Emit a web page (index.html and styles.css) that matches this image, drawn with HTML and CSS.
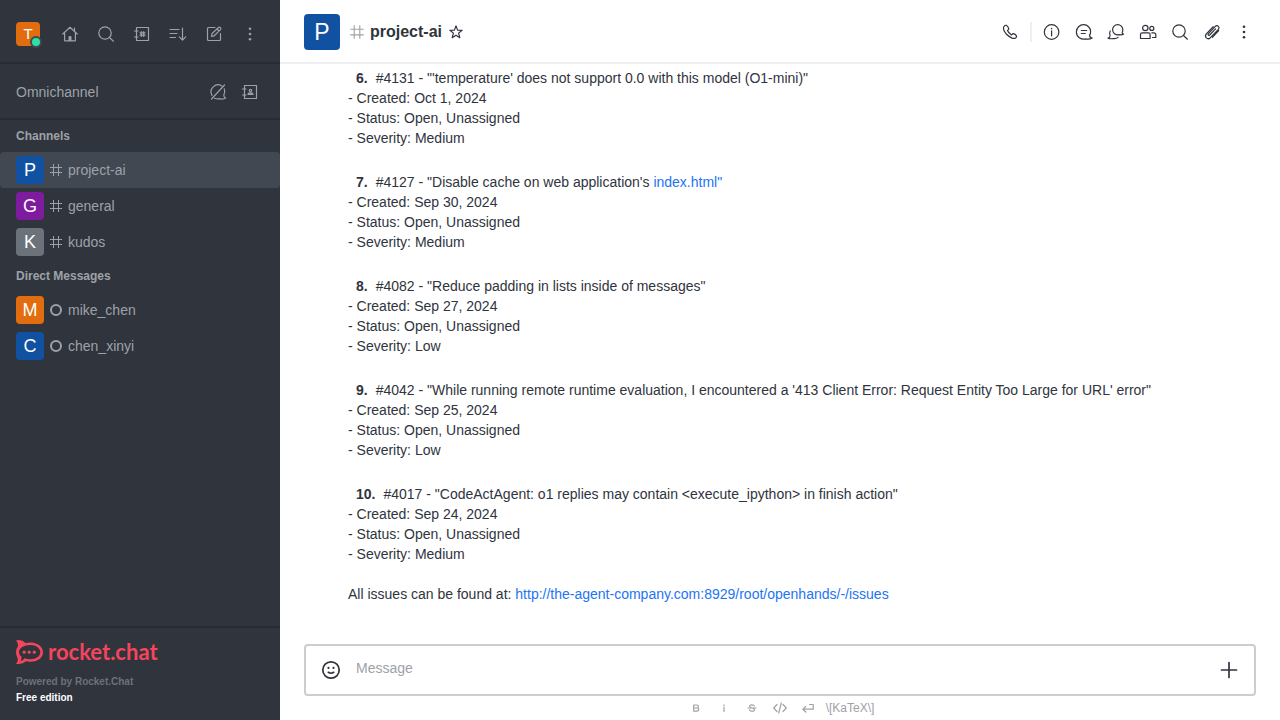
FILE: index.html
```html
<!DOCTYPE html>
<html lang="en">
<head>
<meta charset="utf-8">
<title>project-ai</title>
<link rel="stylesheet" href="styles.css">
</head>
<body>
<svg class="defs" aria-hidden="true">
  <symbol id="hash" viewBox="0 0 16 16"><path d="M5.500 2v12M10.500 2v12M2 5.500h12M2 10.500h12"/></symbol>
  <symbol id="search" viewBox="0 0 20 20"><circle cx="9" cy="9" r="6.200"/><path d="M13.500 13.500l3.900 3.700"/></symbol>
  <symbol id="kebab" viewBox="0 0 20 20"><g class="solid"><circle cx="10" cy="4.800" r="1.300"/><circle cx="10" cy="10" r="1.300"/><circle cx="10" cy="15.200" r="1.300"/></g></symbol>
  <symbol id="book" viewBox="0 0 20 20"><path d="M4.500 3.500h12v13h-12zM2.500 7h3.500M2.500 13h3.500"/></symbol>
</svg>
<div class="app">
  <aside class="sidebar">
    <header class="topbar">
      <button class="avatar user" aria-label="User menu">T<span class="online"></span></button>
      <nav class="tools">
        <button aria-label="Home"><svg viewBox="0 0 20 20"><path d="M2.800 10L10 3.300 17.200 10M4.600 8.500v7.900q0 .5.500.5h9.800q.5 0 .5-.5V8.500M14.500 4v3"/><path class="solid" d="M8.500 17v-4q0-1 1-1h1q1 0 1 1v4z"/></svg></button>
        <button aria-label="Search"><svg><use href="#search"/></svg></button>
        <button aria-label="Directory"><svg viewBox="0 0 20 20"><use href="#book"/><path d="M9.300 7.500v5M11.700 7.500v5M8 8.800h5M8 11.200h5"/></svg></button>
        <button aria-label="Display"><svg viewBox="0 0 20 20"><path d="M2 5.500h9M2 9.500h7M2 13.500h5.500M14.500 4v12M11.300 12.900l3.200 3.200 3.200-3.200"/></svg></button>
        <button aria-label="Create new"><svg viewBox="0 0 20 20"><path d="M11 3.500H4.500q-1 0-1 1v11q0 1 1 1h11q1 0 1-1V9.500M7.500 12.500l.6-3 6.400-6q1-.7 1.900.2.900 1 .1 1.900l-6.300 6.200zM13 5l2 2"/></svg></button>
        <button aria-label="More"><svg><use href="#kebab"/></svg></button>
      </nav>
    </header>
    <section class="omni">
      <h2>Omnichannel</h2>
      <div class="tools close">
        <button aria-label="Livechat availability"><svg viewBox="0 0 20 20"><path d="M13.800 3.900A7.100 7.100 0 0 0 4 13.500M6.500 16.200Q9 17.200 12 16.700q3 .9 5.700-.7-2-.5-1.900-2.900 1.600-2.800.5-6.200M3.500 17L16.500 3"/></svg></button>
        <button aria-label="Contact center"><svg viewBox="0 0 20 20"><use href="#book"/><circle cx="10.500" cy="8.600" r="1.200"/><path d="M8 12.300q0-1.500 2.500-1.500t2.500 1.500z"/></svg></button>
      </div>
    </section>
    <nav class="rooms">
      <h3>Channels</h3>
      <a class="room selected" href="#project-ai"><span class="avatar blue">P</span><svg><use href="#hash"/></svg>project-ai</a>
      <a class="room" href="#general"><span class="avatar purple">G</span><svg><use href="#hash"/></svg>general</a>
      <a class="room" href="#kudos"><span class="avatar gray">K</span><svg><use href="#hash"/></svg>kudos</a>
      <h3>Direct Messages</h3>
      <a class="room" href="#mike"><span class="avatar orange">M</span><span class="offline"></span>mike_chen</a>
      <a class="room" href="#chen"><span class="avatar blue">C</span><span class="offline"></span>chen_xinyi</a>
    </nav>
    <footer class="brand">
      <a class="logo" href="#home"><svg viewBox="0 0 27 24" aria-hidden="true"><path class="solid" fill-rule="evenodd" d="M0 .5Q5.500-1 9.500 3 12 2.400 15 2.500C22 2.800 27 7 27 12.200S22 21.500 15 21.700q-2.500.1-5-.4Q6 24.800 0 23.700q2.500-2.700 1.600-5.500Q0 15.500 0 12.300 0 8.700 2 6.200 2.400 3 0 .5zM14.500 5C8 5 3 8 3 12.200q0 2.800 2.500 4.600.2 2.300-1 4.500 2.500-.4 4-3 2.500.9 6 .9c5.500 0 9.800-3 9.800-7S20 5 14.500 5z"/><g class="solid"><circle cx="8.200" cy="12.200" r="1.600"/><circle cx="13.200" cy="12.200" r="1.600"/><circle cx="18.300" cy="12.200" r="1.600"/></g></svg><span>rocket.chat</span></a>
      <p class="powered">Powered by Rocket.Chat</p>
      <p class="edition">Free edition</p>
    </footer>
  </aside>
  <main class="main">
    <header class="room-header">
      <span class="avatar large blue">P</span>
      <svg class="hash"><use href="#hash"/></svg>
      <h1>project-ai</h1>
      <button class="star" aria-label="Favorite"><svg viewBox="0 0 16 16"><path d="M8 1.900l1.600 4.200 4.500.2-3.500 2.800 1.200 4.600L8 11.200l-3.800 2.500 1.200-4.600-3.500-2.800 4.500-.2z"/></svg></button>
      <div class="actions">
        <button aria-label="Call"><svg viewBox="0 0 20 20"><path d="M4.200 4.200q1-1.300 2.400-.8 1.700 1.500 2.200 3.300 0 .8-1.300 1.800.8 2.400 4 4.400 1.400-1.300 2.200-1.200 1.800.5 2.700 2.200.5 1-.8 2-1.500 1-3.600.2Q5.500 13 3.600 7.500q-.5-2 .6-3.300z"/></svg></button>
        <span class="divider"></span>
        <button aria-label="Room information"><svg viewBox="0 0 20 20"><circle cx="9.600" cy="10" r="7.300"/><path d="M9.600 8.800v5"/><circle class="solid" cx="9.600" cy="6.600" r=".8"/></svg></button>
        <button aria-label="Threads"><svg viewBox="0 0 20 20"><path d="M15.600 13.200Q16.800 11.400 16.600 9.500A7 7 0 0 0 9.800 2.700 7.200 7.200 0 0 0 2.400 10c0 5 4.500 7.900 9.400 6.900q3.500.8 6.400-.9-2.600-.2-2.600-2.800zM7.300 8.500h5.400M7.300 11.500h4"/></svg></button>
        <button aria-label="Discussion"><svg viewBox="0 0 20 20"><path d="M16.100 10.700q.9-1.500.7-3A5 5 0 0 0 6.600 7.700c0 3.400 3 5.500 6.200 5q2.800.6 4.900-.7-1.500-.2-1.600-1.300zM4.200 9q-1.300 2.500-.1 4.800-.1 1.900-2.100 2.300 2.300 1.100 5 .4 3.200.5 5.100-1.100"/></svg></button>
        <button aria-label="Members"><svg viewBox="0 0 20 20"><circle cx="7.300" cy="6" r="2.700"/><circle cx="13.800" cy="6.400" r="2"/><path d="M2.500 16.500v-4q0-1.700 1.700-1.700h6.300q1.600 0 1.600 1.700v4zM13.800 10.800h2q2 0 2 2v2.700h-3.300"/></svg></button>
        <button aria-label="Search messages"><svg><use href="#search"/></svg></button>
        <button aria-label="Files"><svg viewBox="0 0 20 20"><path d="M13.500 6.800L7.700 13q-.8.700-1.400.1-.6-.7.100-1.500l6.900-7.300q1.700-1.400 3.100 0 1.400 1.400 0 3l-8 8.400q-2.100 2-4 .2-1.900-2-.1-4.100l6.900-7.200M16.700 8.700l-6.300 6.600"/></svg></button>
        <button aria-label="Options"><svg><use href="#kebab"/></svg></button>
      </div>
    </header>
    <section class="messages">
      <div class="issue"><p><b>6.</b>#4131 - "'temperature' does not support 0.0 with this model (O1-mini)"</p><p>- Created: Oct 1, 2024</p><p>- Status: Open, Unassigned</p><p>- Severity: Medium</p></div>
      <div class="issue"><p><b>7.</b>#4127 - "Disable cache on web application's <a href="#index">index.html"</a></p><p>- Created: Sep 30, 2024</p><p>- Status: Open, Unassigned</p><p>- Severity: Medium</p></div>
      <div class="issue"><p><b>8.</b>#4082 - "Reduce padding in lists inside of messages"</p><p>- Created: Sep 27, 2024</p><p>- Status: Open, Unassigned</p><p>- Severity: Low</p></div>
      <div class="issue"><p><b>9.</b>#4042 - "While running remote runtime evaluation, I encountered a '413 Client Error: Request Entity Too Large for URL' error"</p><p>- Created: Sep 25, 2024</p><p>- Status: Open, Unassigned</p><p>- Severity: Low</p></div>
      <div class="issue"><p><b>10.</b>#4017 - "CodeActAgent: o1 replies may contain &lt;execute_ipython&gt; in finish action"</p><p>- Created: Sep 24, 2024</p><p>- Status: Open, Unassigned</p><p>- Severity: Medium</p></div>
      <p class="closing">All issues can be found at: <a href="#issues">http://the-agent-company.com:8929/root/openhands/-/issues</a></p>
    </section>
    <form class="composer">
      <div class="field">
        <button type="button" aria-label="Emoji"><svg viewBox="0 0 20 20"><circle cx="10" cy="10" r="8.200"/><path d="M7.300 12.300q2.700 1.900 5.400 0"/><g class="solid"><circle cx="7.500" cy="7.900" r="1.100"/><circle cx="12.500" cy="7.900" r="1.100"/></g></svg></button>
        <textarea rows="1" placeholder="Message" aria-label="Message"></textarea>
        <button type="button" aria-label="More actions"><svg viewBox="0 0 20 20"><path d="M10 2.500v15M2.500 10h15"/></svg></button>
      </div>
      <div class="format">
        <button type="button" aria-label="Bold"><svg viewBox="0 0 16 16"><path d="M5.700 5h3q1.700 0 1.700 1.500T8.700 8h-3zM5.700 8h3.200q1.900 0 1.900 1.600t-1.900 1.600H5.700z"/></svg></button>
        <button type="button" aria-label="Italic"><svg viewBox="0 0 16 16"><path d="M8 7.200v4.300M8 4.800v.6"/></svg></button>
        <button type="button" aria-label="Strike"><svg viewBox="0 0 16 16"><path d="M10.300 6Q9.800 4.800 8 4.800q-2.300 0-2.300 1.500Q5.700 7.600 8 8q2.500.5 2.500 1.700 0 1.500-2.500 1.500-1.900 0-2.500-1.300M4 8h8"/></svg></button>
        <button type="button" aria-label="Code"><svg viewBox="0 0 16 16"><path d="M5 4.500L1.700 8 5 11.500M11 4.500L14.300 8 11 11.500M9.300 3L6.700 13"/></svg></button>
        <button type="button" aria-label="Multiline"><svg viewBox="0 0 16 16"><path d="M9.500 4.500h3.700v4.700H3M5.800 6.400L2.900 9.200 5.800 12"/></svg></button>
        <a href="#katex">\[KaTeX\]</a>
      </div>
    </form>
  </main>
</div>
</body>
</html>
```
FILE: styles.css
```css
* { box-sizing: border-box; }
body, h1, h2, h3, p { margin: 0; }
body { font: 14px/20px "Liberation Sans", Arial, sans-serif; color: #2f343d; background: #fff; }
button { display: flex; align-items: center; justify-content: center; padding: 0; border: 0; background: none; color: inherit; font: inherit; flex: none; }
a { color: #1d74f5; text-decoration: none; }
svg { display: block; flex: none; width: 20px; height: 20px; fill: none; stroke: currentColor; stroke-width: 1.2; stroke-linecap: round; stroke-linejoin: round; }
.solid { fill: currentColor; stroke: none; }
.defs { position: absolute; width: 0; height: 0; }

.app { display: flex; height: 100vh; }
.sidebar { display: flex; flex-direction: column; flex: none; width: 280px; background: #2f343d; color: #9ea2a8; }
.topbar, .omni { display: flex; align-items: center; justify-content: space-between; padding: 0 16px; border-bottom: 2px solid #272b33; }
.topbar { height: 64px; padding-top: 6px; }
.omni { height: 56px; padding-top: 2px; }
.omni h2 { font-size: 14px; font-weight: 400; }
.tools { display: flex; gap: 8px; }
.tools.close { gap: 4px; }
.tools button { width: 28px; height: 28px; }

.avatar { display: flex; align-items: center; justify-content: center; flex: none; width: 28px; height: 28px; border-radius: 4px; color: #fff; font-size: 18px; }
.avatar.user { position: relative; width: 24px; height: 24px; background: #e26d0e; font-size: 15px; }
.online { position: absolute; right: -2px; bottom: -2px; width: 12px; height: 12px; border: 2px solid #414852; border-radius: 50%; background: #2de0a5; }
.avatar.large { width: 36px; height: 36px; font-size: 23px; }
.blue { background: #1052a1; }
.purple { background: #7f1b9f; }
.gray { background: #6c727a; }
.orange { background: #e26d0e; }

.rooms { flex: 1; min-height: 0; overflow: hidden; }
.rooms h3 { padding: 6px 16px; font-size: 12px; line-height: 20px; }
.room { display: flex; align-items: center; gap: 4px; height: 36px; padding: 0 16px; border-radius: 4px; color: #9ea2a8; }
.room.selected { background: #414852; }
.room svg { width: 16px; height: 16px; stroke-width: 1; stroke-linecap: butt; }
.offline { width: 12px; height: 12px; margin: 0 2px; border: 2px solid #9ea2a8; border-radius: 50%; }

.brand { padding: 12px 16px 14px; border-top: 2px solid #272b33; font-size: 10px; line-height: 16px; font-weight: 700; }
.logo { display: flex; align-items: center; gap: 5px; height: 24px; margin-bottom: 10px; color: #f5455c; font: 700 22px/24px Lato, sans-serif; }
.logo svg { width: 27px; height: 24px; }
.powered { color: #6c727a; }
.edition { color: #fff; }

.main { display: flex; flex-direction: column; flex: 1; min-width: 0; }
.room-header { display: flex; align-items: center; flex: none; height: 64px; padding: 2px 24px 0; border-bottom: 2px solid #eeeff1; }
.room-header h1 { font-size: 16px; line-height: 24px; }
.room-header .hash { width: 18px; height: 18px; margin: 0 4px 0 8px; color: #9ea2a8; stroke-width: 1; stroke-linecap: butt; }
.star { margin-left: 6px; }
.star svg { width: 16px; height: 16px; }
.actions { display: flex; align-items: center; gap: 8px; margin-left: auto; }
.actions button { width: 24px; height: 24px; }
.divider { width: 2px; height: 20px; background: #eeeff1; }

.messages { flex: 1; min-height: 0; overflow: hidden; padding: 4px 24px 0 68px; }
.issue { margin-bottom: 24px; }
.issue:nth-last-child(2) { margin-bottom: 20px; }
.issue b { margin: 0 8px; }

.composer { flex: none; padding: 0 24px; }
.field { display: flex; align-items: center; gap: 8px; padding: 8px 10px; border: 2px solid #cbced1; border-radius: 4px; }
.field button { width: 30px; height: 32px; }
.field svg { stroke-width: 1.7; }
.field textarea { flex: 1; min-width: 0; height: 28px; padding: 2px 2px 6px; border: 0; outline: 0; resize: none; font: inherit; line-height: 20px; color: inherit; background: none; }
.field textarea::placeholder { color: #9ea2a8; }
.format { display: flex; align-items: center; justify-content: center; gap: 8px; height: 24px; color: #9ea2a8; }
.format button { width: 20px; height: 20px; }
.format svg { width: 16px; height: 16px; }
.format a { color: inherit; font-size: 12px; }
```
